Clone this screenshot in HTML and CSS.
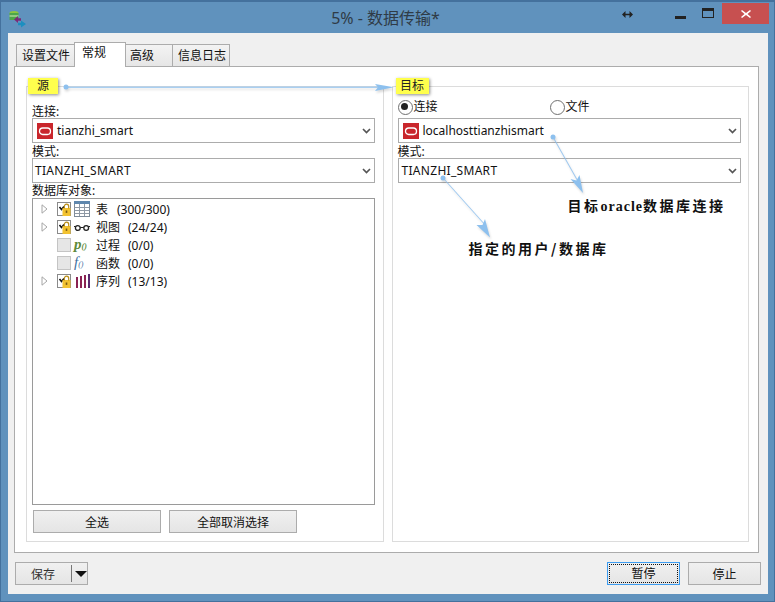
FILE: index.html
```html
<!DOCTYPE html>
<html lang="zh">
<head>
<meta charset="utf-8">
<title>5% - 数据传输*</title>
<link rel="stylesheet" href="styles.css">
</head>
<body>
<svg width="0" height="0" class="defs">
  <defs>
    <symbol id="oracle" viewBox="0 0 16 16"><rect width="16" height="16" fill="#c9262c"/><rect x="2.5" y="5" width="11" height="6.5" rx="3.2" fill="none" stroke="#fff" stroke-width="1.3"/></symbol>
    <symbol id="lockcheck" viewBox="0 0 14 14"><rect x=".5" y=".5" width="13" height="13" fill="#fff" stroke="#8a8a8a"/><path d="M2.5 5l2 2.5 2.5-3" fill="none" stroke="#111" stroke-width="1.6"/><rect x="5.5" y="6" width="8" height="8" fill="#f2c230"/><path d="M7.3 6.5V4.4a2.2 2.2 0 0 1 4.4 0v2.1" fill="none" stroke="#b98d16" stroke-width="1.2"/><rect x="8.7" y="8.5" width="1.6" height="2.4" fill="#7a5a10"/></symbol>
    <symbol id="arrowdown" viewBox="0 0 9 6"><path d="M1 1l3.5 3.5L8 1" fill="none" stroke="#555" stroke-width="1.7"/></symbol>
    <symbol id="expander" viewBox="0 0 7 10"><path d="M1 .8L6 5 1 9.2z" fill="#fff" stroke="#a6a6a6"/></symbol>
  </defs>
</svg>
<div class="window">
  <header class="titlebar">
    <svg class="appicon" width="18" height="18" viewBox="0 0 18 18">
      <ellipse cx="5" cy="3" rx="4.5" ry="2" fill="#8cc63f"/>
      <rect x=".5" y="3" width="9" height="7" fill="#4da64a"/>
      <path d="M.5 6h9" stroke="#d8eeb8"/>
      <path d="M11 6v2.2h-3V6L4 9.5 8 13v-2.2h3z" fill="#7b2a78" transform="translate(1 0)"/>
      <path d="M12 10.5v2.2H9v2.6h3V17.500l5-3.500z" fill="#1c8fc0"/>
    </svg>
    <h1 class="title">5% - 数据传输*</h1>
    <div class="winctrls">
      <svg class="resize" width="11" height="7" viewBox="0 0 11 7"><path d="M0 3.500L3.500 0v7zM11 3.500L7.500 0v7z" fill="#222"/><path d="M3 3.500h5" stroke="#222" stroke-width="1.500"/></svg>
      <span class="wbtn min"></span>
      <span class="wbtn max"></span>
      <span class="wbtn close">
        <svg width="10" height="8" viewBox="0 0 10 8"><path d="M1 0l4 3 4-3 1 1-3.500 3L10 7 9 8 5 5 1 8 0 7l3.500-3L0 1z" fill="#fff"/></svg>
      </span>
    </div>
  </header>
  <main class="client">
    <nav class="tabs">
      <span class="tab t1">设置文件</span>
      <span class="tab active">常规</span>
      <span class="tab t3">高级</span>
      <span class="tab t4">信息日志</span>
    </nav>
    <section class="panel">
      <div class="group">
        <span class="legend legend-src">源</span>
        <div class="spacer-top"></div>
        <label class="lbl first">连接:</label>
        <div class="combo">
          <svg class="oracle" width="16" height="16"><use href="#oracle"/></svg>
          <span class="val">tianzhi_smart</span>
          <svg class="chev" width="9" height="6"><use href="#arrowdown"/></svg>
        </div>
        <label class="lbl mode">模式:</label>
        <div class="combo">
          <span class="val plain">TIANZHI_SMART</span>
          <svg class="chev" width="9" height="6"><use href="#arrowdown"/></svg>
        </div>
        <label class="lbl objects">数据库对象:</label>
        <div class="tree">
          <div class="row">
            <svg class="exp" width="7" height="10"><use href="#expander"/></svg>
            <svg class="chk" width="14" height="14"><use href="#lockcheck"/></svg>
            <svg class="ico" width="16" height="16" viewBox="0 0 16 16"><rect x=".5" y=".5" width="15" height="15" fill="#fff" stroke="#7d8a99"/><rect x="0" y="0" width="16" height="3" fill="#5f87ad"/><path d="M.5 6.500h15M.5 9.500h15M.5 12.500h15M5.500 3v12M10.500 3v12" stroke="#8f99a5"/></svg>
            <span class="name">表</span><span class="count c1">(300/300)</span>
          </div>
          <div class="row">
            <svg class="exp" width="7" height="10"><use href="#expander"/></svg>
            <svg class="chk" width="14" height="14"><use href="#lockcheck"/></svg>
            <svg class="ico" width="16" height="16" viewBox="0 0 16 16"><circle cx="3.800" cy="9" r="2.400" fill="none" stroke="#222" stroke-width="1.300"/><circle cx="12.200" cy="9" r="2.400" fill="none" stroke="#222" stroke-width="1.300"/><path d="M6.200 8.500h3.600M0 7.500h1.500M14.500 7.500H16" stroke="#222" stroke-width="1.200"/></svg>
            <span class="name">视图</span><span class="count">(24/24)</span>
          </div>
          <div class="row">
            <span class="exp-gap"></span>
            <span class="chk-off"></span>
            <span class="fn fn-p">p<small>()</small></span>
            <span class="name">过程</span><span class="count">(0/0)</span>
          </div>
          <div class="row">
            <span class="exp-gap"></span>
            <span class="chk-off"></span>
            <span class="fn fn-f">f<small>()</small></span>
            <span class="name">函数</span><span class="count">(0/0)</span>
          </div>
          <div class="row">
            <svg class="exp" width="7" height="10"><use href="#expander"/></svg>
            <svg class="chk" width="14" height="14"><use href="#lockcheck"/></svg>
            <svg class="ico" width="16" height="16" viewBox="0 0 16 16"><path d="M2 4h2v11H2zM6 3h2v12H6zM10 2h2v13h-2z" fill="#8b2252"/><path d="M14 1h2v14h-2z" fill="#5a2a6e"/></svg>
            <span class="name">序列</span><span class="count">(13/13)</span>
          </div>
        </div>
        <div class="btnrow">
          <button class="btn wide">全选</button>
          <button class="btn wide">全部取消选择</button>
        </div>
      </div>
      <div class="group">
        <span class="legend legend-dst">目标</span>
        <div class="radios">
          <span class="radio on">连接</span>
          <span class="radio">文件</span>
        </div>
        <div class="combo">
          <svg class="oracle" width="16" height="16"><use href="#oracle"/></svg>
          <span class="val">localhosttianzhismart</span>
          <svg class="chev" width="9" height="6"><use href="#arrowdown"/></svg>
        </div>
        <label class="lbl mode">模式:</label>
        <div class="combo">
          <span class="val plain plain-r">TIANZHI_SMART</span>
          <svg class="chev" width="9" height="6"><use href="#arrowdown"/></svg>
        </div>
        <div class="notes">
          <p class="note note-a">目标<b>oracle</b>数据库连接</p>
          <p class="note note-b">指定的用户/数据库</p>
        </div>
      </div>
    </section>
    <footer class="footer">
      <div class="split">
        <span class="split-main">保存</span>
        <span class="split-sep"></span>
        <span class="split-arrow"></span>
      </div>
      <div class="actions">
        <button class="btn act focus"><span class="focusring">暂停</span></button>
        <button class="btn act">停止</button>
      </div>
    </footer>
  </main>
  <svg class="arrows" width="775" height="602" viewBox="0 0 775 602">
    <g fill="#8dc0ee" stroke="none">
      <circle cx="66" cy="87" r="2.500"/>
      <path d="M66 86.500H378V88H66z" opacity=".75"/>
      <path d="M375 84L394 87.300 375 91 378 87.300z"/>
      <circle cx="553" cy="137" r="2.500"/>
      <path d="M552.600 137.300l.8-.5 27 48-.8.500z" opacity=".85"/>
      <path d="M583 193L570.500 179 576.500 180.500 579.500 175z"/>
      <circle cx="443" cy="178" r="2.500"/>
      <path d="M442.700 178.300l.7-.6 43 48-.7.600z" opacity=".85"/>
      <path d="M490 237.500L476.500 225 482.500 225 485 219z"/>
    </g>
  </svg>
</div>
</body>
</html>
```

FILE: styles.css
```css
* { box-sizing: border-box; }
html, body { margin: 0; padding: 0; }
body {
  width: 775px;
  height: 602px;
  overflow: hidden;
  font-family: "Noto Sans", "Noto Sans CJK SC", sans-serif;
  font-size: 12px;
  color: #111;
}
.defs { position: absolute; }
.window {
  position: relative;
  width: 775px;
  height: 602px;
  background: #6092bd;
  border: 1px solid #44719d;
  border-top: 2px solid #44719d;
  padding: 0 6px 7px 7px;
  display: flex;
  flex-direction: column;
}
.titlebar {
  height: 31px;
  flex: none;
  display: flex;
  align-items: flex-start;
  position: relative;
}
.appicon { margin: 8px 0 0 1px; flex: none; }
.title {
  position: absolute;
  left: 0;
  right: 0;
  top: 5px;
  margin: 0;
  padding-right: 5px;
  text-align: center;
  font-size: 16px;
  line-height: 22px;
  font-weight: 400;
  color: #2f3b46;
}
.winctrls { margin-left: auto; margin-right: -1px; display: flex; align-items: flex-start; height: 22px; position: relative; }
.resize { margin: 9px 42px 0 0; }
.wbtn { display: block; flex: none; }
.min { width: 11px; height: 3px; background: #222; margin: 14px 16px 0 0; }
.max { width: 12px; height: 10px; border: 1px solid #222; border-top-width: 3px; margin: 6px 8px 0 0; }
.close {
  width: 47px;
  height: 21px;
  margin-top: 1px;
  background: #c75050;
  display: flex;
  align-items: center;
  justify-content: center;
}
.client {
  flex: 1;
  background: #f0f0f0;
  padding: 9px 9px 0 6px;
  display: flex;
  flex-direction: column;
  min-height: 0;
}
.tabs { display: flex; height: 24px; align-items: flex-end; padding-left: 2px; flex: none; position: relative; z-index: 1; }
.tab {
  height: 22px;
  border: 1px solid #acacac;
  border-bottom: 0;
  border-right-width: 0;
  background: linear-gradient(#f3f3f3, #e6e6e6);
  font-size: 12px;
  line-height: 21px;
  color: #111;
  padding-left: 5px;
}
.t1 { width: 58px; }
.t3 { width: 46px; padding-left: 3px; }
.t4 { width: 58px; border-right-width: 1px; }
.tab.active { width: 52px; padding-left: 7px; background: #fff; line-height: 20px; margin-bottom: -1px; height: 25px; border-right-width: 1px; }
.t3 { border-left: 0; padding-left: 4px; }
.panel {
  height: 487px;
  flex: none;
  background: #fff;
  border: 1px solid #acacac;
  padding: 19px 9px 10px 11px;
  display: flex;
  gap: 8px;
}
.group {
  position: relative;
  width: 358px;
  border: 1px solid #dcdcdc;
  padding: 0 8px 0 5px;
  display: flex;
  flex-direction: column;
}
.group + .group { padding-left: 5px; padding-right: 7px; }
.legend {
  position: absolute;
  top: -9px;
  height: 16px;
  line-height: 16px;
  background: #ffff4d;
  box-shadow: 1px 1px 3px rgba(0,0,0,.45);
  text-align: center;
  color: #222;
  font-size: 12px;
}
.legend-src { left: 1px; width: 30px; }
.legend-dst { left: 3px; width: 33px; }
.spacer-top { height: 14px; flex: none; }
.lbl { display: block; height: 17px; line-height: 17px; font-size: 12px; color: #111; flex: none; }
.lbl.first { line-height: 21px; }
.lbl.mode { height: 15px; line-height: 17px; }
.lbl.objects { height: 15px; line-height: 15px; }
.combo {
  height: 25px;
  flex: none;
  border: 1px solid #acacac;
  background: #fff;
  display: flex;
  align-items: center;
  padding-left: 4px;
  padding-right: 3px;
}
.oracle { flex: none; margin-right: 4px; }
.val { flex: 1; font-size: 12px; }
.val.plain { margin-left: -2px; letter-spacing: .3px; }
.val.plain-r { margin-left: -1px; }
.chev { flex: none; }
.tree {
  height: 307px;
  flex: none;
  border: 1px solid #9a9a9a;
  background: #fff;
  padding: 1px 0 0 8px;
}
.row { display: flex; align-items: center; height: 18px; }
.exp { flex: none; margin-right: 9px; }
.exp-gap { width: 7px; margin-right: 9px; flex: none; }
.chk { flex: none; margin-right: 3px; }
.chk-off { width: 14px; height: 14px; background: #e6e6e6; border: 1px solid #c4c4c4; flex: none; margin-right: 3px; }
.ico { flex: none; margin-right: 6px; }
.fn {
  width: 16px;
  margin-right: 6px;
  flex: none;
  font-family: "Liberation Serif", serif;
  font-style: italic;
  font-size: 15px;
  line-height: 16px;
  white-space: nowrap;
}
.fn small { font-size: 8px; }
.fn-p { color: #5e8a3a; font-weight: 700; }
.fn-f { color: #3f6f9f; }
.name { flex: none; }
.count { margin-left: 8px; }
.c1 { margin-left: 9px; }
.btnrow { display: flex; gap: 8px; margin: 5px 0 0 1px; }
.btn {
  height: 23px;
  padding: 0;
  border: 1px solid #acacac;
  background: linear-gradient(#f0f0f0, #e5e5e5);
  font: inherit;
  font-size: 12px;
  color: #111;
}
.wide { width: 128px; }
.radios { display: flex; height: 31px; padding: 13px 0 0; flex: none; }
.radio { height: 14px; line-height: 14px; width: 152px; font-size: 12px; position: relative; padding-left: 16px; }
.radio::before {
  content: "";
  position: absolute;
  left: 0;
  top: 0;
  width: 13px;
  height: 13px;
  border-radius: 50%;
  border: 1px solid #707070;
  background: #fff;
}
.radio.on::after {
  content: "";
  position: absolute;
  left: 3px;
  top: 3px;
  width: 7px;
  height: 7px;
  border-radius: 50%;
  background: #222;
}
.notes { flex: 1; padding: 12px 0 0; }
.note {
  margin: 0;
  font-family: "Noto Sans CJK SC", sans-serif;
  font-weight: 700;
  font-size: 14px;
  line-height: 20px;
  letter-spacing: 2.5px;
  color: #111;
}
.note b { font-family: "Liberation Serif", serif; font-size: 14px; letter-spacing: 1px; }
.note-a { margin-left: 170px; }
.note-b { margin: 21px 0 0 71px; }
.footer {
  flex: 1;
  display: flex;
  justify-content: space-between;
  padding: 9px 0 0 1px;
  margin-right: -2px;
  align-items: flex-start;
}
.split {
  width: 73px;
  height: 23px;
  border: 1px solid #acacac;
  background: linear-gradient(#f0f0f0, #e5e5e5);
  display: flex;
  align-items: center;
  color: #333;
}
.split-main { width: 55px; text-align: center; }
.split-sep { width: 1px; height: 17px; background: #777; flex: none; margin-left: 1px; }
.split-arrow {
  margin-left: 3px;
  border-left: 6px solid transparent;
  border-right: 6px solid transparent;
  border-top: 6px solid #111;
  width: 0;
  height: 0;
}
.actions { display: flex; gap: 8px; }
.act { width: 73px; }
.act.focus { border-color: #3c9cf0; padding: 1px; }
.focusring { display: block; height: 100%; line-height: 17px; border: 1px dotted #111; }
.arrows { position: absolute; left: -1px; top: -2px; pointer-events: none; filter: drop-shadow(1px 2px 1px rgba(0,0,0,.15)); }
```
